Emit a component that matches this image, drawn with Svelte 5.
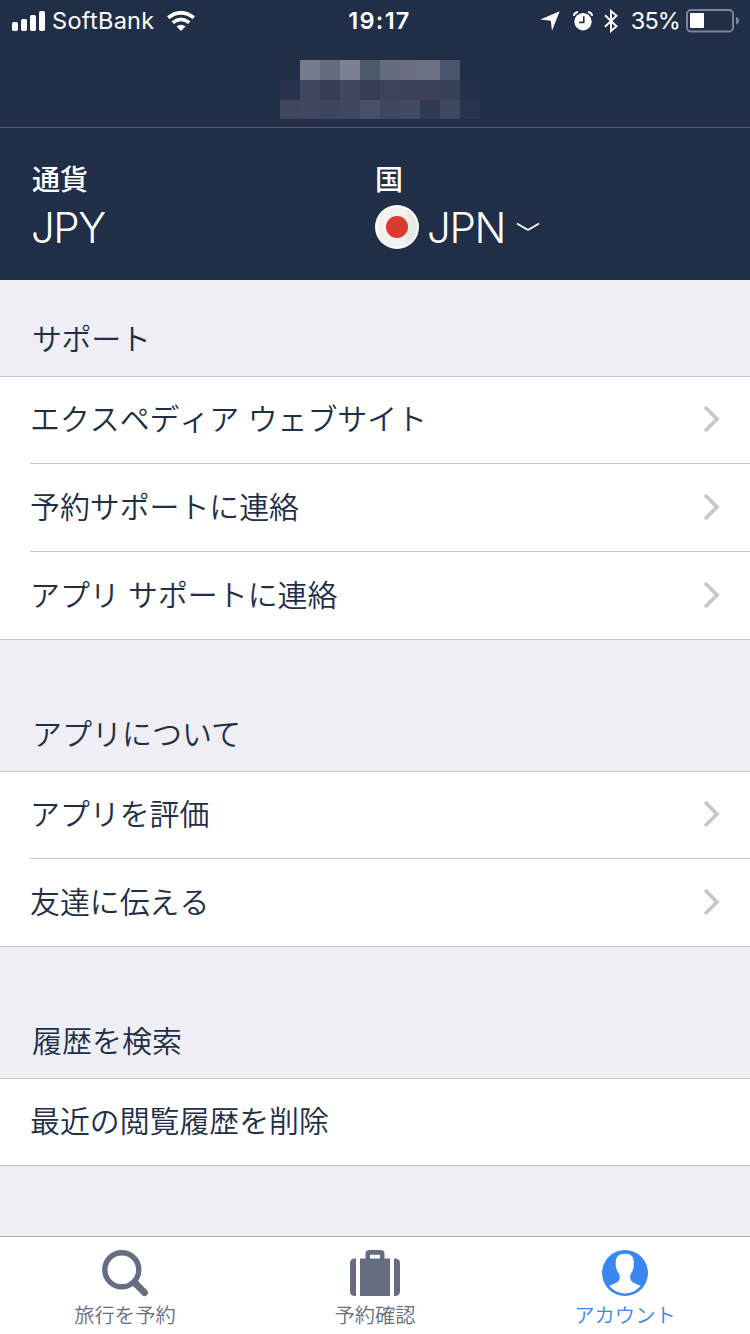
<script>
  const mosaic = [
    ['#222d48', '#757a8a', '#646c7e', '#7c8193', '#4d586b', '#646c7e', '#6b6f81', '#6b7082', '#4b556d', '#202e48'],
    ['#28324d', '#3f4860', '#363e57', '#404860', '#353d57', '#3b435c', '#3a4159', '#3a4159', '#384057', '#25304a'],
    ['#3f475d', '#40475f', '#3d455d', '#40485f', '#475068', '#3f475f', '#434b63', '#303b53', '#40485f', '#28334d']
  ].flat();
  const sections = [
    { title: 'サポート', rows: ['エクスペディア ウェブサイト', '予約サポートに連絡', 'アプリ サポートに連絡'], arrow: true },
    { title: 'アプリについて', rows: ['アプリを評価', '友達に伝える'], arrow: true },
    { title: '履歴を検索', rows: ['最近の閲覧履歴を削除'], arrow: false }
  ];
</script>

<div class="screen">
  <header>
    <div class="status">
      <div class="side left">
        <svg class="signal" width="34" height="20" viewBox="0 0 34 20" fill="#fff">
          <rect x="0" y="11" width="6" height="9" rx="1.7" />
          <rect x="9" y="8" width="6" height="12" rx="1.7" />
          <rect x="18" y="4" width="6" height="16" rx="1.7" />
          <rect x="27" y="0" width="6" height="20" rx="1.7" />
        </svg>
        <span class="carrier">SoftBank</span>
        <svg class="wifi" width="28" height="20" viewBox="0 0 28 20">
          <g fill="none" stroke="#fff" stroke-width="3.7">
            <path d="M1.2 6.7Q14-3.1 26.8 6.7" />
            <path d="M5.7 11.6Q14 5.3 22.3 11.6" />
          </g>
          <path d="M9.5 15.5Q14 12 18.5 15.5L14 20Z" fill="#fff" />
        </svg>
      </div>
      <span class="time">19:17</span>
      <div class="side right">
        <svg width="20" height="20" viewBox="0 0 20 20"><path d="M19.7.3L12 19.7L10.8 9.8L.3 8.5Z" fill="#fff" /></svg>
        <svg class="alarm" width="20" height="20" viewBox="0 0 20 20">
          <circle cx="10" cy="10.7" r="8.7" fill="#fff" />
          <path d="M.7 4.8C1.1 2.7 2.8 1.3 5 1M15 1C17.2 1.3 18.9 2.7 19.3 4.8" fill="none" stroke="#fff" stroke-width="1.8" />
          <path d="M10.8 5.3V11.4H6.2" fill="none" stroke="#202e48" stroke-width="1.6" />
        </svg>
        <svg class="bluetooth" width="14" height="24" viewBox="0 0 14 24"><path d="M1 6.2L12.5 17.2L7 22V2L12.5 6.7L1 17.8" fill="none" stroke="#fff" stroke-width="1.9" /></svg>
        <span class="percent">35%</span>
        <svg class="battery" width="53" height="24" viewBox="0 0 53 24">
          <rect x="1" y="1" width="46" height="21.5" rx="4" fill="none" stroke="#7e8594" stroke-width="2" />
          <rect x="4" y="4" width="14" height="15" rx="1" fill="#fff" />
          <path d="M50 8Q53 9 53 11.7Q53 14.5 50 15.5Z" fill="#7e8594" />
        </svg>
      </div>
    </div>
    <div class="title">
      <div class="mosaic">
        {#each mosaic as color}<i style="background:{color}"></i>{/each}
      </div>
    </div>
    <div class="locale">
      <div class="field">
        <b>通貨</b>
        <div class="value">JPY</div>
      </div>
      <div class="field">
        <b>国</b>
        <div class="value">
          <svg class="flag" width="44" height="44" viewBox="0 0 44 44">
            <circle cx="22" cy="22" r="22" fill="#fff" />
            <circle cx="22" cy="22" r="20" fill="#f2f1f1" />
            <path d="M31 4.2A20 20 0 0 1 28 41Q37 20 31 4.2Z" fill="#eae9ea" />
            <circle cx="22" cy="22" r="11" fill="#db3a31" />
          </svg>
          <span>JPN</span>
          <svg class="down" width="24" height="10" viewBox="0 0 24 10"><path d="M1 1.5L10.7 7.2Q12 8 13.3 7.2L23 1.5" fill="none" stroke="#fff" stroke-width="1.8" /></svg>
        </div>
      </div>
    </div>
  </header>

  <main>
    {#each sections as section}
      <section>
        <h2>{section.title}</h2>
        <ul>
          {#each section.rows as row}
            <li>
              <span>{row}</span>
              {#if section.arrow}
                <svg width="18" height="28" viewBox="0 0 18 28"><path d="M2 2L14 14L2 26" fill="none" stroke="#c7c7cc" stroke-width="3.8" /></svg>
              {/if}
            </li>
          {/each}
        </ul>
      </section>
    {/each}
  </main>

  <nav>
    <div class="tab">
      <svg width="48" height="48" viewBox="0 0 48 48" fill="none" stroke="#656e81">
        <circle cx="20.8" cy="19.8" r="17" stroke-width="5.4" />
        <path d="M35 34L43.6 42.6" stroke-width="6.8" stroke-linecap="round" />
        <path d="M31 30L36 35" stroke-width="6.8" />
      </svg>
      <span>旅行を予約</span>
    </div>
    <div class="tab">
      <svg width="50" height="48" viewBox="0 0.5 50 48" fill="#656e81">
        <path d="M6 9V46.5H5Q0 46.5 0 41.5V14Q0 9 5 9ZM44 9V46.5H45Q50 46.5 50 41.5V14Q50 9 45 9Z" />
        <path fill-rule="evenodd" d="M10 9H15.5V4.5Q15.5.5 19.5.5H30.5Q34.5.5 34.5 4.5V9H40V46.5H10ZM20 5.3V9H30V5.3Z" />
      </svg>
      <span>予約確認</span>
    </div>
    <div class="tab active">
      <svg width="46" height="48" viewBox="0 0.5 46 48">
        <circle cx="23" cy="23.5" r="23" fill="#3a87ef" />
        <path d="M23 4.2C29.5 4.2 32 7.8 31.8 13.2C31.7 19.2 30.8 22.1 28.5 25C27.5 31.5 29 32.7 38.8 36.3C30 46.5 16 46.5 7.2 36.3C17 32.7 18.5 31.5 17.5 25C15.2 22.1 13.5 18.2 13.7 13.2C14 7 16.5 4.2 23 4.2Z" fill="#fff" />
      </svg>
      <span>アカウント</span>
    </div>
  </nav>
</div>

<style>
  :global(body) { margin: 0; }
  .screen {
    width: 750px;
    height: 1334px;
    display: flex;
    flex-direction: column;
    background: #efeef4;
    color: #202e48;
    font-family: Inter, "Noto Sans CJK JP", sans-serif;
    overflow: hidden;
  }
  svg { display: block; flex: none; }
  header { height: 280px; background: #202e48; color: #fff; flex: none; }
  .status {
    height: 40px;
    display: grid;
    grid-template-columns: 1fr auto 1fr;
    align-items: center;
    padding: 0 11px 0 12px;
    font-size: 23.5px;
    line-height: 42px;
  }
  .side { display: flex; align-items: center; }
  .side svg { margin-bottom: 1px; }
  .right { justify-content: flex-end; }
  .carrier { margin-left: 6px; letter-spacing: 0.3px; }
  .wifi { margin-left: 12px; }
  .time { font-weight: 600; font-size: 23.5px; letter-spacing: 1.3px; padding-left: 8px; }
  .alarm { margin-left: 13px; }
  .bluetooth { margin-left: 11px; }
  .percent { margin-left: 13px; letter-spacing: -0.9px; }
  .battery { margin-left: 6px; }
  .title {
    height: 87px;
    padding-top: 20px;
    box-sizing: border-box;
    display: flex;
    justify-content: center;
  }
  .mosaic { display: grid; grid-template-columns: repeat(10, 20px); grid-template-rows: 20px 20px 19px; margin-left: 10px; }
  .locale {
    height: 153px;
    box-sizing: border-box;
    border-top: 1px solid #535d74;
    padding: 35px 32px 0;
    display: grid;
    grid-template-columns: 343px 1fr;
  }
  b { display: block; font-size: 28px; line-height: 34px; font-weight: 500; }
  .value { display: flex; align-items: center; height: 60px; font-size: 42px; font-weight: 350; letter-spacing: -1.3px; }
  .field:first-child .value { letter-spacing: -1.5px; text-indent: -1px; }
  .flag { margin-right: 8px; }
  .down { margin-left: 11px; }
  main { flex: 1; }
  h2 {
    margin: 0;
    height: 131px;
    box-sizing: border-box;
    padding: 72px 32px 0;
    font-size: 30px;
    line-height: 44px;
    font-weight: 350;
  }
  section:first-child h2 { height: 96px; padding-top: 37px; letter-spacing: -0.4px; }
  ul {
    list-style: none;
    margin: 0;
    padding: 0 0 0 30px;
    background: #fff;
    border-top: 1px solid #c8c7cc;
    border-bottom: 1px solid #c8c7cc;
  }
  li {
    height: 87px;
    display: flex;
    justify-content: space-between;
    align-items: center;
    padding-right: 29px;
    font-size: 29.9px;
    font-weight: 350;
    font-kerning: none;
  }
  li span { padding-bottom: 5px; }
  li svg { margin-bottom: 2px; }
  li:first-child { height: 86px; }
  li:first-child span { padding-bottom: 7px; }
  li + li { border-top: 1px solid #c8c7cc; }
  nav {
    height: 97px;
    border-top: 1px solid #a9a9b2;
    background: #fff;
    display: grid;
    grid-template-columns: repeat(3, 1fr);
    color: #656e81;
    flex: none;
  }
  .tab { display: flex; flex-direction: column; align-items: center; padding-top: 13px; font-size: 20.3px; line-height: 30px; font-weight: 350; }
  .tab span { margin-top: 3px; }
  .active { color: #3a87ef; }
</style>
